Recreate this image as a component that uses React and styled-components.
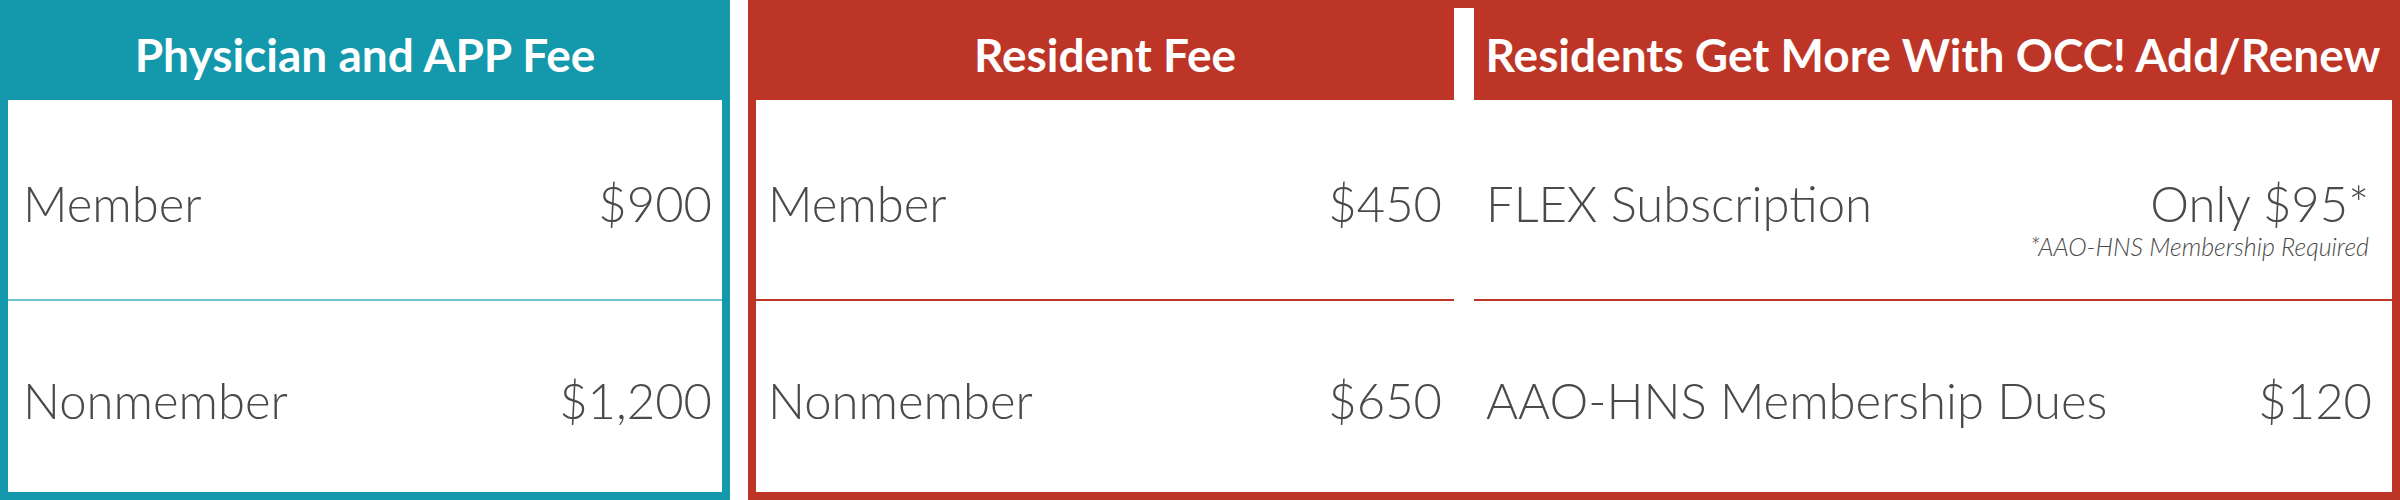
import React from 'react';
import styled, { createGlobalStyle } from 'styled-components';

const teal = '#1399ab';
const red = '#bd3526';

const GlobalStyle = createGlobalStyle`
  body {
    margin: 0;
    background: #ffffff;
    font-family: Lato, "Open Sans", sans-serif;
  }
`;

const Page = styled.div`
  display: flex;
  gap: 18px;
  width: 2400px;
  height: 500px;
`;

const Panel = styled.div`
  box-sizing: border-box;
  display: flex;
  gap: 20px;
  width: ${(p) => p.width || 'auto'};
  flex: ${(p) => (p.width ? '0 0 auto' : '1')};
  border: 8px solid ${(p) => p.color};
  background: #ffffff;
`;

const Column = styled.div`
  display: flex;
  flex-direction: column;
  flex: ${(p) => p.grow || 1};
  min-width: 0;
`;

const Header = styled.div`
  display: flex;
  align-items: center;
  justify-content: center;
  height: 92px;
  flex: 0 0 auto;
  box-sizing: border-box;
  background: ${(p) => p.color};
  color: #ffffff;
  font-weight: 700;
  font-size: 46px;
  white-space: nowrap;
`;

const Row = styled.div`
  box-sizing: border-box;
  display: flex;
  align-items: center;
  justify-content: space-between;
  height: ${(p) => (p.last ? 'auto' : '201px')};
  flex: ${(p) => (p.last ? 1 : '0 0 auto')};
  padding: 6px ${(p) => p.padRight || '12px'} 0 ${(p) => p.padLeft || '12px'};
  border-bottom: ${(p) => (p.last ? '0' : `2px solid ${p.line}`)};
  color: #4a4a4a;
  font-weight: 300;
  font-size: 49px;
  white-space: nowrap;
`;

const Price = styled.div`
  display: flex;
  flex-direction: column;
  align-items: flex-end;
`;

const Note = styled.div`
  font-size: 25px;
  line-height: 28px;
  font-style: italic;
  margin-bottom: -28px;
`;

export default function App() {
  return (
    <>
      <GlobalStyle />
      <Page>
        <Panel width="730px" color={teal}>
          <Column>
            <Header color={teal}>Physician and APP Fee</Header>
            <Row line="#6ec4ce" padLeft="15px" padRight="10px">
              <span>Member</span>
              <span>$900</span>
            </Row>
            <Row last padLeft="15px" padRight="10px">
              <span>Nonmember</span>
              <span>$1,200</span>
            </Row>
          </Column>
        </Panel>
        <Panel color={red}>
          <Column grow={698}>
            <Header color={red}>Resident Fee</Header>
            <Row line={red}>
              <span>Member</span>
              <span>$450</span>
            </Row>
            <Row last>
              <span>Nonmember</span>
              <span>$650</span>
            </Row>
          </Column>
          <Column grow={918}>
            <Header color={red}>Residents Get More With OCC! Add/Renew</Header>
            <Row line={red} padRight="23px">
              <span>FLEX Subscription</span>
              <Price>
                <span>Only $95*</span>
                <Note>*AAO-HNS Membership Required</Note>
              </Price>
            </Row>
            <Row last padRight="20px">
              <span>AAO-HNS Membership Dues</span>
              <span>$120</span>
            </Row>
          </Column>
        </Panel>
      </Page>
    </>
  );
}
